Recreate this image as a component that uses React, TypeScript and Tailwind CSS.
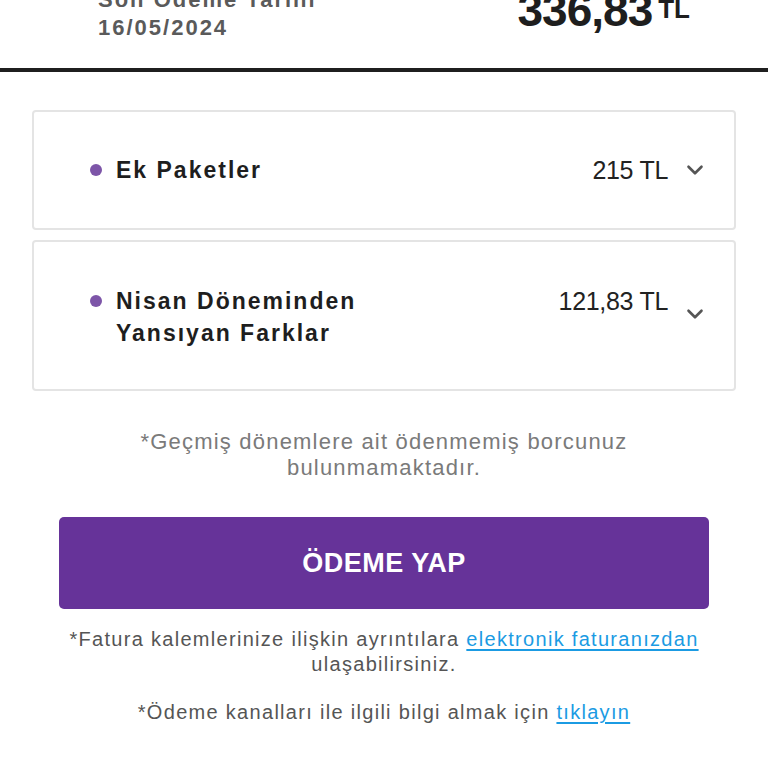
import { ChevronDown } from "lucide-react";

const font = { fontFamily: '"Liberation Sans", Arial, sans-serif' };

function Item({ title, amount, top }: { title: React.ReactNode; amount: string; top?: boolean }) {
  return (
    <div
      className={`flex justify-between rounded-[4px] border-2 border-[#e4e4e4] pl-[56px] pr-[26px] ${
        top ? "h-[120px] items-center" : "h-[151px] items-start pt-[43px]"
      }`}
    >
      <div className="flex items-start gap-[14px]">
        <span className="mt-[10px] h-[12px] w-[12px] shrink-0 rounded-full bg-[#7d55a8]" />
        <div className="text-[23px] font-bold leading-[32px] tracking-[2px] text-[#1e1e1e]">{title}</div>
      </div>
      <div className="flex items-start gap-[14px]">
        <span className="text-[25px] leading-[32px] tracking-[-0.3px] text-[#222]">{amount}</span>
        <ChevronDown
          className={`h-[26px] w-[26px] text-[#555] ${top ? "mt-[3px]" : "mt-[16px]"}`}
          strokeWidth={2.4}
        />
      </div>
    </div>
  );
}

export default function App() {
  return (
    <div className="h-[768px] w-[768px] overflow-hidden bg-white" style={font}>
      <div className="flex h-[68px] items-end justify-between pb-[26px] pl-[98px] pr-[78px]">
        <div className="text-[22px] font-bold leading-[28px] tracking-[2px] text-[#5a5a5a]">
          <div>Son Ödeme Tarihi</div>
          <div>16/05/2024</div>
        </div>
        <div className="mb-[12px] flex items-end gap-[6px] text-[#1e1e1e]">
          <span className="text-[46px] font-bold leading-[40px] tracking-[-1px]">336,83</span>
          <span className="mb-[9px] text-[26px] font-bold leading-[24px]">TL</span>
        </div>
      </div>
      <div className="h-[4px] bg-[#1f1f1f]" />

      <div className="flex flex-col gap-[10px] px-[32px] pt-[38px]">
        <Item top title="Ek Paketler" amount="215 TL" />
        <Item
          title={
            <>
              Nisan Döneminden
              <br />
              Yansıyan Farklar
            </>
          }
          amount="121,83 TL"
        />
      </div>

      <p className="mt-[38px] px-[110px] text-center text-[22px] leading-[26px] tracking-[1.2px] text-[#7a7a7a]">
        *Geçmiş dönemlere ait ödenmemiş borcunuz bulunmamaktadır.
      </p>

      <div className="px-[59px] pt-[36px]">
        <button
          type="button"
          className="flex h-[92px] w-full items-center justify-center rounded-[5px] bg-[#663399] text-[27px] font-bold tracking-[0.5px] text-white"
        >
          ÖDEME YAP
        </button>
      </div>

      <p className="mt-[18px] px-[40px] text-center text-[20px] leading-[25px] tracking-[1.3px] text-[#555]">
        *Fatura kalemlerinize ilişkin ayrıntılara{" "}
        <a className="text-[#1b9be3] underline underline-offset-[3px]" href="#">
          elektronik faturanızdan
        </a>{" "}
        ulaşabilirsiniz.
      </p>
      <p className="mt-[23px] text-center text-[20px] leading-[25px] tracking-[1.3px] text-[#555]">
        *Ödeme kanalları ile ilgili bilgi almak için{" "}
        <a className="text-[#1b9be3] underline underline-offset-[3px]" href="#">
          tıklayın
        </a>
      </p>
    </div>
  );
}
